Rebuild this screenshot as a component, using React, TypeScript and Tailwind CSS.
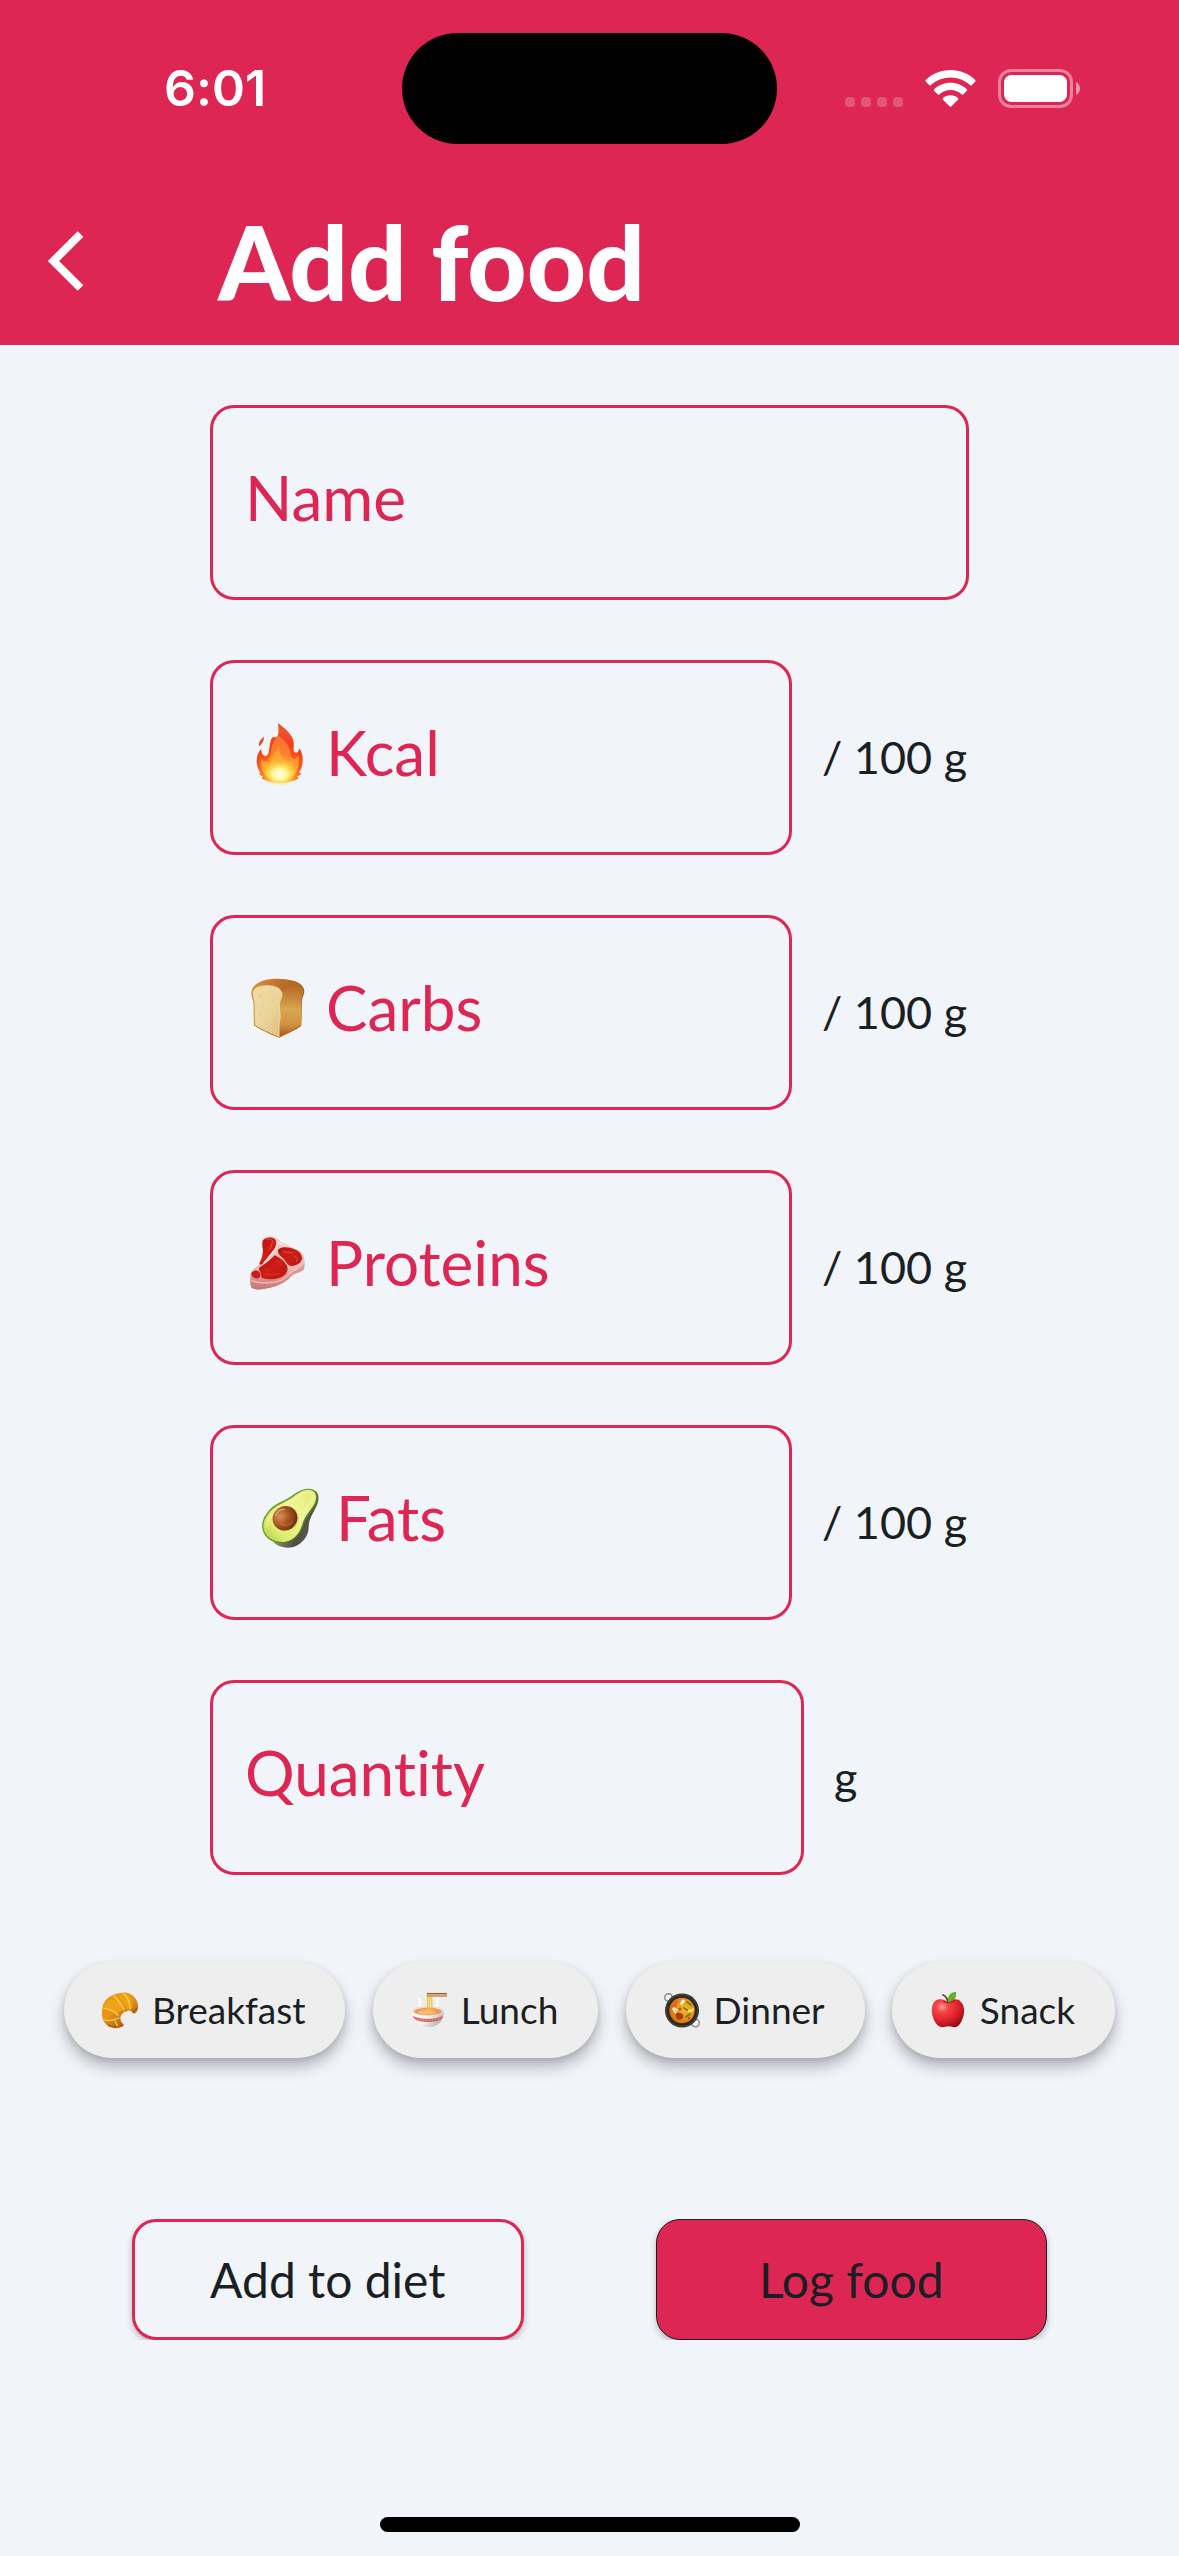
import React from "react";

/* ---------- status bar glyphs ---------- */

function SignalDots() {
  return (
    <svg width="58" height="39" viewBox="0 0 58 39" fill="#fff" fillOpacity="0.22" aria-hidden="true">
      {[0, 16, 32, 48].map((x) => (
        <rect key={x} x={x} y="28" width="10" height="10" rx="3.5" />
      ))}
    </svg>
  );
}

function WifiIcon() {
  return (
    <svg width="51" height="39" viewBox="0 0 51 39" fill="#fff" aria-hidden="true">
      <path d="M25.500 1C35 1 44 4.700 50.300 11Q51 11.800 50.300 12.600L46.600 16.300Q46 16.900 45.300 16.300C40 11.300 33 8.400 25.500 8.400S11 11.300 5.700 16.300Q5 16.900 4.400 16.300L.7 12.600Q0 11.800.7 11C7 4.700 16 1 25.500 1Z" />
      <path d="M25.500 13.700C31.800 13.700 37.500 16.100 41.900 20.200Q42.500 21 41.900 21.700L38.100 25.400Q37.400 26 36.700 25.400C33.700 22.700 29.800 21.100 25.500 21.100S17.300 22.700 14.300 25.400Q13.600 26 12.900 25.400L9.100 21.700Q8.500 21 9.100 20.200C13.500 16.100 19.200 13.700 25.500 13.700Z" />
      <path d="M25.500 26.300C28.300 26.300 31 27.300 33 29.100Q33.700 29.900 33 30.700L26.200 37.600Q25.500 38.200 24.800 37.600L18 30.700Q17.300 29.900 18 29.100C20 27.300 22.700 26.300 25.500 26.300Z" />
    </svg>
  );
}

function BatteryIcon() {
  return (
    <svg width="82" height="39" viewBox="0 0 82 39" aria-hidden="true">
      <rect x="1.500" y="1.500" width="72" height="36" rx="11.500" fill="none" stroke="#fff" strokeOpacity="0.42" strokeWidth="3" />
      <rect x="6" y="6" width="63" height="27" rx="7.500" fill="#fff" />
      <path d="M78 13V26C80.500 25 82 22.500 82 19.500S80.500 14 78 13Z" fill="#fff" fillOpacity="0.5" />
    </svg>
  );
}

/* ---------- nutrient icons ---------- */

function FireIcon() {
  return (
    <svg width="65" height="66" viewBox="45 60 195 198" aria-hidden="true">
      <defs>
        <radialGradient id="fireOuter" gradientUnits="userSpaceOnUse" cx="149" cy="222" r="125">
          <stop offset="0" stopColor="#ffe94e" />
          <stop offset="0.3" stopColor="#ffa626" />
          <stop offset="0.5" stopColor="#fb5a1a" />
          <stop offset="0.75" stopColor="#f23d1a" />
          <stop offset="1" stopColor="#f0532f" />
        </radialGradient>
        <linearGradient id="fireMid" x1="0" y1="0" x2="0" y2="1">
          <stop offset="0" stopColor="#fc7a3a" />
          <stop offset="0.45" stopColor="#fd8f30" />
          <stop offset="1" stopColor="#ffd93d" />
        </linearGradient>
        <radialGradient id="fireCore">
          <stop offset="0" stopColor="#fffef0" />
          <stop offset="0.45" stopColor="#fff79a" />
          <stop offset="1" stopColor="#ffdf3c" stopOpacity="0" />
        </radialGradient>
      </defs>
      <path d="M101 110C103 121 99 127 88 139C84 127 91 121 101 110Z" fill="#ee4a2a" />
      <path
        d="M144 70C161 82 181 98 189 118C195 134 187 148 193 157C200 161 206 157 208 145C216 157 219 170 218 184C217 200 213 209 207 217L214 222L201 230L206 235C190 245 170 249 149 249C127 249 108 244 95 235L99 230L86 221L92 220C84 209 80 196 80 182C80 167 85 156 94 146C93 158 97 167 106 168C117 167 116 153 119 138C121 125 123 115 129 111C137 114 142 110 144 104C147 95 145 84 144 70Z"
        fill="url(#fireOuter)"
      />
      <path
        d="M143 107C156 112 169 126 176 140C182 153 178 165 186 174C195 179 201 174 205 165C210 189 205 212 187 229C170 244 128 244 110 229C93 213 89 193 94 175C98 184 106 186 113 180C125 169 122 153 127 136C130 125 136 116 143 107Z"
        fill="url(#fireMid)"
        opacity="0.8"
      />
      <path
        d="M148 138C145 155 154 163 160 177C164 186 174 188 182 182C194 197 193 216 178 230C163 243 135 243 119 229C104 215 104 202 112 187C118 191 126 186 128 176C131 161 138 153 148 138Z"
        fill="#ffc83a"
        opacity="0.45"
      />
      <ellipse cx="149" cy="222" rx="48" ry="38" fill="url(#fireCore)" />
    </svg>
  );
}

function BreadIcon() {
  return (
    <svg width="65" height="66" viewBox="45 60 195 198" aria-hidden="true">
      <defs>
        <linearGradient id="breadTop" x1="0" y1="0" x2="1" y2="0.35">
          <stop offset="0" stopColor="#dc9448" />
          <stop offset="0.5" stopColor="#bd7029" />
          <stop offset="1" stopColor="#ad5f1c" />
        </linearGradient>
        <linearGradient id="breadSide" gradientUnits="userSpaceOnUse" x1="185" y1="88" x2="178" y2="238">
          <stop offset="0" stopColor="#b4681f" />
          <stop offset="0.25" stopColor="#c58439" />
          <stop offset="0.5" stopColor="#d9a653" />
          <stop offset="0.8" stopColor="#d2933f" />
          <stop offset="1" stopColor="#ae6522" />
        </linearGradient>
        <linearGradient id="breadCrumb" x1="0" y1="0" x2="1" y2="1">
          <stop offset="0" stopColor="#f1dda0" />
          <stop offset="0.55" stopColor="#e9d49a" />
          <stop offset="1" stopColor="#dcbf7e" />
        </linearGradient>
      </defs>
      <path
        d="M64 118C62 98 78 83 99 77C126 68 164 70 190 77C211 82 223 95 223 109C223 120 217 125 216 137L214 211C213 216 193 227 148 248C140 247 94 225 73 212C70 207 72 151 70 140C68 131 65 127 64 118Z"
        fill="url(#breadTop)"
      />
      <path
        d="M156 112C168 98 185 90 200 89C214 91 221 103 220 112C215 123 214 130 214 140L213 209C210 214 171 234 146 247L148 198C150 184 144 174 147 155C148 140 155 130 156 112Z"
        fill="url(#breadSide)"
      />
      <path
        d="M69 117C70 100 84 93 108 92C139 91 156 102 156 119C155 131 148 138 148 152C147 171 153 181 150 193C146 203 148 219 147 246C137 242 86 219 75 210C72 183 75 160 73 140C72 130 68 126 69 117Z"
        fill="url(#breadCrumb)"
      />
      <path
        d="M69 117C70 100 84 93 108 92C139 91 156 102 156 119C155 131 148 138 148 152C147 171 153 181 150 193C146 203 148 219 147 246"
        fill="none"
        stroke="#f7e7b4"
        strokeWidth="3"
        opacity="0.7"
      />
      <g fill="#cfb271" opacity="0.3">
        <circle cx="92" cy="122" r="4" />
        <circle cx="117" cy="112" r="3" />
        <circle cx="128" cy="136" r="4" />
        <circle cx="101" cy="151" r="3" />
        <circle cx="90" cy="179" r="4" />
        <circle cx="119" cy="171" r="3" />
        <circle cx="133" cy="197" r="4" />
        <circle cx="107" cy="206" r="3" />
      </g>
    </svg>
  );
}

function SteakIcon() {
  return (
    <svg width="65" height="66" viewBox="45 60 195 198" aria-hidden="true">
      <defs>
        <linearGradient id="steakRim" x1="0" y1="0" x2="0" y2="1">
          <stop offset="0" stopColor="#f4cfc9" />
          <stop offset="0.6" stopColor="#eebbb5" />
          <stop offset="0.85" stopColor="#d98783" />
          <stop offset="1" stopColor="#a94b49" />
        </linearGradient>
        <linearGradient id="steakMeat" x1="0" y1="0" x2="1" y2="1">
          <stop offset="0" stopColor="#b01210" />
          <stop offset="0.5" stopColor="#cf1d16" />
          <stop offset="1" stopColor="#b81713" />
        </linearGradient>
      </defs>
      <path
        d="M98 88C105 78 121 75 133 81C141 84 148 88 153 98C164 100 170 101 178 108C192 115 208 120 217 129C225 138 225 164 221 179C210 190 192 187 181 202C164 220 137 231 110 235C93 239 77 241 65 233C59 225 61 201 61 191C66 177 82 172 87 162C93 148 99 134 97 119C95 109 94 97 98 88Z"
        fill="url(#steakRim)"
      />
      <path d="M61 208C79 220 122 222 154 209C176 197 181 182 202 176C213 173 219 168 224 158C224 167 223 173 221 179C210 190 192 187 181 202C164 220 137 231 110 235C93 239 77 241 65 233C60 226 60 216 61 208Z" fill="#d78c89" opacity="0.65" />
      <path d="M99 91C107 81 127 79 135 88C141 95 138 107 135 115C127 128 114 143 102 157C96 166 90 166 88 160C95 146 100 132 99 119C97 109 96 98 99 91Z" fill="url(#steakMeat)" />
      <path d="M146 117C158 108 181 111 197 119C210 125 217 135 216 148C211 162 195 170 180 167C169 162 165 148 154 140C146 134 141 125 146 117Z" fill="url(#steakMeat)" />
      <path d="M89 172C105 163 120 150 134 136C147 141 160 149 168 163C175 172 174 182 167 192C154 207 121 211 98 205C91 201 95 192 90 184C87 178 85 176 89 172Z" fill="url(#steakMeat)" />
      <path d="M66 187C73 179 87 179 90 190C94 200 88 207 77 205C67 203 62 195 66 187Z" fill="#c61d18" />
      <path d="M147 95C145 110 124 132 101 160M148 100C153 106 164 105 169 108" fill="none" stroke="#fbe7e2" strokeWidth="4" strokeLinecap="round" />
      <path d="M110 88C122 84 130 91 128 98C121 101 128 111 120 116M158 124C169 130 176 124 188 129M193 137C201 142 204 150 200 155" fill="none" stroke="#ef8478" strokeWidth="2.500" opacity="0.6" strokeLinecap="round" />
      <path d="M137 151C150 154 150 165 155 168M105 192C119 198 136 192 147 191M107 178L113 182" fill="none" stroke="#f0685c" strokeWidth="2" opacity="0.5" strokeLinecap="round" />
      <path d="M64 211C83 221 130 222 158 209C177 197 183 182 204 176" fill="none" stroke="#fae1db" strokeWidth="3" opacity="0.8" />
    </svg>
  );
}

function AvocadoIcon() {
  return (
    <svg width="75" height="66" viewBox="15 60 225 198" aria-hidden="true">
      <defs>
        <linearGradient id="avoSkin" x1="0" y1="0" x2="1" y2="0.5">
          <stop offset="0.4" stopColor="#8a8770" />
          <stop offset="0.75" stopColor="#514c42" />
          <stop offset="1" stopColor="#655f50" />
        </linearGradient>
        <linearGradient id="avoRim" x1="0" y1="0" x2="1" y2="0.6">
          <stop offset="0" stopColor="#7fae38" />
          <stop offset="0.6" stopColor="#5f9428" />
          <stop offset="1" stopColor="#416f1e" />
        </linearGradient>
        <linearGradient id="avoFlesh" x1="1" y1="0" x2="0" y2="1">
          <stop offset="0" stopColor="#dfea77" />
          <stop offset="0.4" stopColor="#f3f595" />
          <stop offset="0.75" stopColor="#e0ec72" />
          <stop offset="1" stopColor="#a9cf3d" />
        </linearGradient>
        <radialGradient id="avoPit" cx="0.38" cy="0.32" r="0.72">
          <stop offset="0" stopColor="#d8935a" />
          <stop offset="0.45" stopColor="#ad5a26" />
          <stop offset="1" stopColor="#6f2b0e" />
        </radialGradient>
      </defs>
      <path d="M225 77C239 85 237 107 230 122C220 144 205 163 206 188C205 214 187 236 160 246C139 251 116 247 101 232Z" fill="url(#avoSkin)" />
      <path
        d="M66 184C66 164 77 146 93 130C114 111 140 106 162 88C178 76 202 66 220 74C237 82 236 103 228 119C218 139 199 155 192 178C186 204 168 227 138 234C100 240 67 217 66 184Z"
        fill="url(#avoRim)"
      />
      <path
        d="M70 184C71 165 81 149 96 134C117 116 143 109 164 92C180 79 202 69 217 77C231 83 231 101 223 117C213 136 195 151 188 175C181 201 165 224 137 230C101 235 71 214 70 184Z"
        fill="url(#avoFlesh)"
      />
      <path d="M80 188C80 167 92 151 107 138C127 122 148 114 169 98C183 87 199 80 211 84C221 89 219 101 212 113C202 131 184 149 178 170" fill="none" stroke="#fafab3" strokeWidth="5" opacity="0.45" />
      <ellipse cx="138" cy="161" rx="39" ry="37" transform="rotate(-35 138 161)" fill="#cbd95f" opacity="0.8" />
      <ellipse cx="135" cy="160" rx="38" ry="36" transform="rotate(-35 135 160)" fill="url(#avoPit)" />
      <path d="M107 151C111 139 121 133 132 133" fill="none" stroke="#f3bf8c" strokeWidth="5" strokeLinecap="round" opacity="0.65" />
      <path d="M121 174C128 184 145 184 157 171" fill="none" stroke="#d67f3e" strokeWidth="5" strokeLinecap="round" opacity="0.45" />
    </svg>
  );
}

/* ---------- meal icons ---------- */

function CroissantIcon() {
  return (
    <svg width="40" height="40" viewBox="0 0 40 40" aria-hidden="true">
      <defs>
        <linearGradient id="croissant" x1="0" y1="0" x2="0.7" y2="1">
          <stop offset="0" stopColor="#e39a1c" />
          <stop offset="0.5" stopColor="#ea9614" />
          <stop offset="1" stopColor="#a85a10" />
        </linearGradient>
      </defs>
      <path
        d="M21 3C29 1 37 7 38 15C39 21 35 25 32.500 23C31 21 30 20 27.500 21C23 22 20 25 20.500 29C20.500 32 23 33 24 35C21 39 13 39 8 36C2 32 1 24 2.500 17C4 10 10 4 21 3Z"
        fill="url(#croissant)"
      />
      <path d="M7 11C13 8 19 10 24 19C19 21 18 22 17 25C12 21 7 19 3 18Z" fill="#f3a91c" opacity="0.7" />
      <path d="M26 4C32 7 34 12 32 19C30 18 29 18 27 20C24 13 21 9 18 5Z" fill="#f4a81c" opacity="0.6" />
      <path d="M14 6C18 10 22 14 24 20M23 3C28 7 30 12 30 19M3 18C8 19 14 21 18 25M4 30C8 31 14 30 19 28M15 31L18 37" fill="none" stroke="#f8ce5c" strokeWidth="1.200" strokeLinecap="round" />
      <path d="M33 22L37 18M8 35C13 38 19 37 22 35" fill="none" stroke="#8d470b" strokeWidth="1.200" opacity="0.6" />
    </svg>
  );
}

function NoodleIcon() {
  return (
    <svg width="40" height="40" viewBox="0 0 40 40" aria-hidden="true">
      <defs>
        <linearGradient id="bowl" x1="0" y1="0" x2="1" y2="0.4">
          <stop offset="0" stopColor="#fff" />
          <stop offset="0.55" stopColor="#f4f2f1" />
          <stop offset="1" stopColor="#b9b5b3" />
        </linearGradient>
      </defs>
      <path d="M12 18C8 14 13 13 10 8M27 17C31 13 26 11 29 8" fill="none" stroke="#fff" strokeWidth="2.400" strokeLinecap="round" opacity="0.8" />
      <path d="M3 21H35C35 31 29 37 19 37S3 31 3 21Z" fill="url(#bowl)" />
      <ellipse cx="19" cy="21" rx="16" ry="4.800" fill="#e4dfdb" />
      <ellipse cx="19" cy="21.500" rx="14" ry="3.700" fill="#f19a55" />
      <ellipse cx="18" cy="22.300" rx="9" ry="2.200" fill="#f8bd70" />
      <path d="M4 26C12 30 26 30 34 26L33 29C26 33 12 33 5 29Z" fill="#cf3b3b" opacity="0.8" />
      <path d="M5 28C13 31 25 31 33 28" fill="none" stroke="#f7c5bd" strokeWidth="0.800" strokeDasharray="1.500 1.500" />
      <path d="M18.500 4V21M20.500 5V22M22.500 5L23 20" stroke="#f3c442" strokeWidth="1.300" />
      <path d="M18 3.700H38" stroke="#9b5b25" strokeWidth="1.500" />
      <path d="M18 6H38" stroke="#c98a48" strokeWidth="1.500" />
    </svg>
  );
}

function PanIcon() {
  return (
    <svg width="40" height="40" viewBox="0 0 40 40" aria-hidden="true">
      <defs>
        <radialGradient id="panFood" cx="0.6" cy="0.45" r="0.6">
          <stop offset="0" stopColor="#f5b72d" />
          <stop offset="0.6" stopColor="#ea931f" />
          <stop offset="1" stopColor="#d56b18" />
        </radialGradient>
      </defs>
      <circle cx="6.500" cy="7.500" r="3.800" fill="none" stroke="#8d8984" strokeWidth="1.400" />
      <circle cx="33.500" cy="33" r="3.800" fill="none" stroke="#8d8984" strokeWidth="1.400" />
      <circle cx="20" cy="20.500" r="17" fill="#2e2925" />
      <circle cx="20" cy="20.500" r="16" fill="none" stroke="#59504a" strokeWidth="0.800" />
      <circle cx="20" cy="20.500" r="12.700" fill="url(#panFood)" />
      <path d="M9 20C9 15 12 11 16 10C16 15 13 17 14 22Z" fill="#e7671d" />
      <path d="M20 10C23 8 24 12 21 14C18 17 17 13 20 10Z" fill="#fff0b2" />
      <path d="M26 20L32 18C32 22 29 23 26 22Z" fill="#fbe06b" />
      <path d="M11 19L14 23M12 18L15 20" stroke="#fff2df" strokeWidth="1.700" strokeLinecap="round" />
      <path d="M14 23C18 22 23 24 21 28C18 32 12 29 14 23Z" fill="#a8410e" />
      <path d="M24 27L28 24M22 18L25 20M25 12L29 15" stroke="#66861b" strokeWidth="1.700" strokeLinecap="round" />
      <circle cx="18" cy="19" r="1.500" fill="#d5401b" />
      <circle cx="27" cy="28" r="1.300" fill="#d5401b" />
    </svg>
  );
}

function AppleIcon() {
  return (
    <svg width="40" height="40" viewBox="0 0 40 40" aria-hidden="true">
      <defs>
        <radialGradient id="apple" cx="0.32" cy="0.28" r="0.8">
          <stop offset="0" stopColor="#ff9a8c" />
          <stop offset="0.25" stopColor="#f04646" />
          <stop offset="0.65" stopColor="#dd1f2a" />
          <stop offset="1" stopColor="#8c0c17" />
        </radialGradient>
      </defs>
      <path
        d="M20 12C24 9 30 8 33 12C37 16 37 24 34 30C32 35 29 38 25 37C22 36 19 36 16 37C11 38 8 34 6 30C3 23 3 15 7 11C11 8 16 9 20 12Z"
        fill="url(#apple)"
      />
      <path d="M15 11C18 13 23 13 27 10" fill="none" stroke="#8f1019" strokeWidth="1.500" opacity="0.6" />
      <path d="M20 12C19 8 18 6 15 5" fill="none" stroke="#6b3a1c" strokeWidth="1.800" strokeLinecap="round" />
      <path d="M20 12C19 6 23 2 28 2C29 8 25 12 20 12Z" fill="#58ab1f" />
      <path d="M20 12L27 4" stroke="#93d052" strokeWidth="0.800" />
    </svg>
  );
}

/* ---------- form pieces ---------- */

type FieldProps = {
  id: string;
  label: string;
  icon?: React.ReactNode;
  unit?: string;
  unitWidth?: string;
};

function Field({ id, label, icon, unit, unitWidth = "" }: FieldProps) {
  return (
    <div className="flex items-center gap-[30px]">
      <label
        htmlFor={id}
        className="flex h-[195px] min-w-0 flex-1 cursor-text items-center gap-4 rounded-3xl border-3 border-[#de2654] px-8 pb-2.5 text-[62px] text-[#de2654]"
      >
        {icon}
        <span>{label}</span>
        <input id={id} type="text" className="w-0 min-w-0 flex-1 bg-transparent outline-none" />
      </label>
      {unit && <span className={`shrink-0 text-[45px] whitespace-nowrap ${unitWidth}`}>{unit}</span>}
    </div>
  );
}

const nutrients = [
  { id: "kcal", label: "Kcal", icon: <FireIcon /> },
  { id: "carbs", label: "Carbs", icon: <BreadIcon /> },
  { id: "proteins", label: "Proteins", icon: <SteakIcon /> },
  { id: "fats", label: "Fats", icon: <AvocadoIcon /> },
];

const meals = [
  { label: "Breakfast", icon: <CroissantIcon /> },
  { label: "Lunch", icon: <NoodleIcon /> },
  { label: "Dinner", icon: <PanIcon /> },
  { label: "Snack", icon: <AppleIcon /> },
];

export default function App() {
  return (
    <div className="flex min-h-screen flex-col bg-[#f1f4f9] font-['Lato',sans-serif] text-[#1a1f24] [font-variant-ligatures:none]">
      <header className="bg-[#de2654] text-white">
        <div className="grid h-[177px] grid-cols-[1fr_375px_1fr] items-center">
          <time className="pl-7 text-center font-['Inter',sans-serif] text-[50px] font-semibold">6:01</time>
          <div className="h-[111px] rounded-full bg-black" />
          <div className="flex items-center justify-center gap-[22px] pr-8">
            <SignalDots />
            <WifiIcon />
            <BatteryIcon />
          </div>
        </div>
        <div className="flex h-[168px] items-center">
          <button type="button" aria-label="Back" className="flex w-[218px] justify-start pl-12">
            <svg width="36" height="60" viewBox="0 0 36 60" fill="none" stroke="#fff" strokeWidth="8" aria-hidden="true">
              <path d="M32.500 3L5.500 30L32.500 57" />
            </svg>
          </button>
          <h1 className="text-[103px] leading-none font-black">Add food</h1>
        </div>
      </header>

      <main className="flex flex-1 flex-col">
        <form className="flex flex-col" onSubmit={(e) => e.preventDefault()}>
          <div className="flex flex-col gap-[60px] px-[210px] pt-[60px]">
            <Field id="name" label="Name" />
            {nutrients.map((n) => (
              <Field key={n.id} id={n.id} label={n.label} icon={n.icon} unit="/ 100 g" unitWidth="w-[147px]" />
            ))}
            <Field id="quantity" label="Quantity" unit="g" unitWidth="w-[135px]" />
          </div>

          <div className="mt-[87px] flex justify-between px-16">
            {meals.map((m) => (
              <button
                key={m.label}
                type="button"
                className="flex h-24 items-center gap-3 rounded-full bg-[#eeeeee] pr-10 pl-9 text-[37px] shadow-[0_9px_15px_rgba(0,0,0,0.26),0_2px_6px_rgba(0,0,0,0.1)]"
              >
                {m.icon}
                <span>{m.label}</span>
              </button>
            ))}
          </div>

          <div className="mt-[161px] grid grid-cols-2 gap-[132px] overflow-hidden px-[132px]">
            <button
              type="button"
              className="h-[121px] rounded-3xl border-3 border-[#de2654] bg-[#f1f4f9] text-5xl shadow-[0_3px_6px_rgba(0,0,0,0.25)]"
            >
              Add to diet
            </button>
            <button
              type="submit"
              className="h-[121px] rounded-3xl border border-[#1a1f24] bg-[#de2654] text-5xl shadow-[0_3px_6px_rgba(0,0,0,0.25)]"
            >
              Log food
            </button>
          </div>
        </form>
      </main>

      <footer className="flex justify-center pb-6">
        <div className="h-[15px] w-[420px] rounded-full bg-black" />
      </footer>
    </div>
  );
}
